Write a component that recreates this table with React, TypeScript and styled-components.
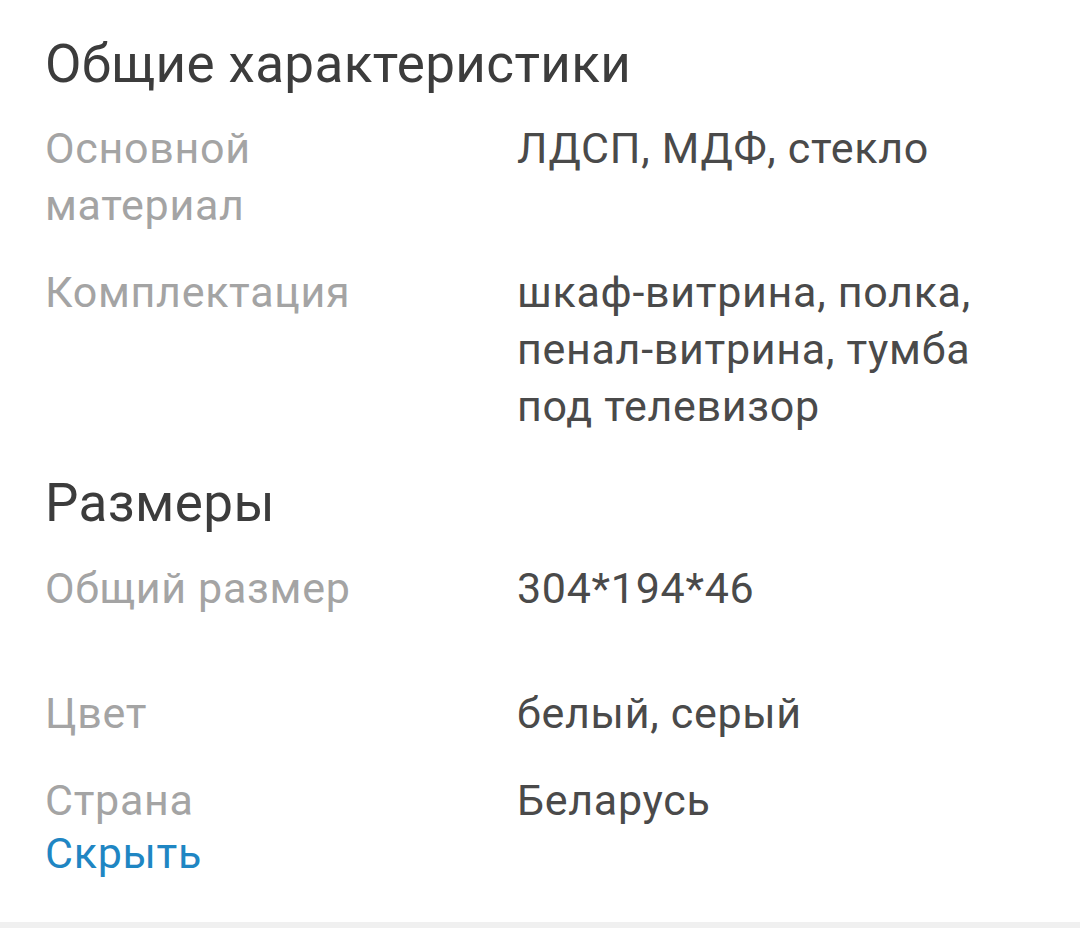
import React from "react";
import styled, { createGlobalStyle } from "styled-components";

const Global = createGlobalStyle`
  html, body { margin: 0; padding: 0; background: #ffffff; }
  body { font-family: Roboto, "Noto Sans", Arial, sans-serif; -webkit-font-smoothing: antialiased; }
`;

const Page = styled.div`
  width: 1080px;
  min-height: 928px;
  display: flex;
  flex-direction: column;
  background: #ffffff;
`;

const Content = styled.div`
  flex: 1;
  padding: 32px 45px 44px 45px;
  display: flex;
  flex-direction: column;
`;

const SectionTitle = styled.h2<{ $gapTop?: number }>`
  margin: ${(p) => p.$gapTop ?? 0}px 0 0 0;
  font-size: 53px;
  line-height: 64px;
  letter-spacing: 0.4px;
  font-weight: 400;
  color: #3c3c3c;
`;

const List = styled.div<{ $gapTop: number }>`
  display: flex;
  flex-direction: column;
  gap: 30px;
  margin-top: ${(p) => p.$gapTop}px;
`;

const Row = styled.div<{ $extraBottom?: number }>`
  display: grid;
  grid-template-columns: 472px 1fr;
  font-size: 43px;
  line-height: 57px;
  letter-spacing: 0.7px;
  margin-bottom: ${(p) => p.$extraBottom ?? 0}px;
`;

const Label = styled.div`
  color: #a4a4a4;
`;

const Value = styled.div`
  color: #4a4a4a;
  padding-right: 30px;
`;

const HideLink = styled.a`
  font-size: 43px;
  line-height: 48px;
  letter-spacing: 0.7px;
  color: #1f86c3;
  text-decoration: none;
  cursor: pointer;
  align-self: flex-start;
`;

const BottomStrip = styled.div`
  height: 6px;
  background: #f0f0f0;
`;

export default function App() {
  return (
    <Page>
      <Global />
      <Content>
        <SectionTitle>Общие характеристики</SectionTitle>
        <List $gapTop={24}>
          <Row>
            <Label>
              Основной
              <br />
              материал
            </Label>
            <Value>ЛДСП, МДФ, стекло</Value>
          </Row>
          <Row>
            <Label>Комплектация</Label>
            <Value>шкаф-витрина, полка, пенал-витрина, тумба под телевизор</Value>
          </Row>
        </List>
        <SectionTitle $gapTop={36}>Размеры</SectionTitle>
        <List $gapTop={25}>
          <Row $extraBottom={38}>
            <Label>Общий размер</Label>
            <Value>304*194*46</Value>
          </Row>
          <Row>
            <Label>Цвет</Label>
            <Value>белый, серый</Value>
          </Row>
          <Row>
            <Label>Страна</Label>
            <Value>Беларусь</Value>
          </Row>
        </List>
        <HideLink>Скрыть</HideLink>
      </Content>
      <BottomStrip />
    </Page>
  );
}
